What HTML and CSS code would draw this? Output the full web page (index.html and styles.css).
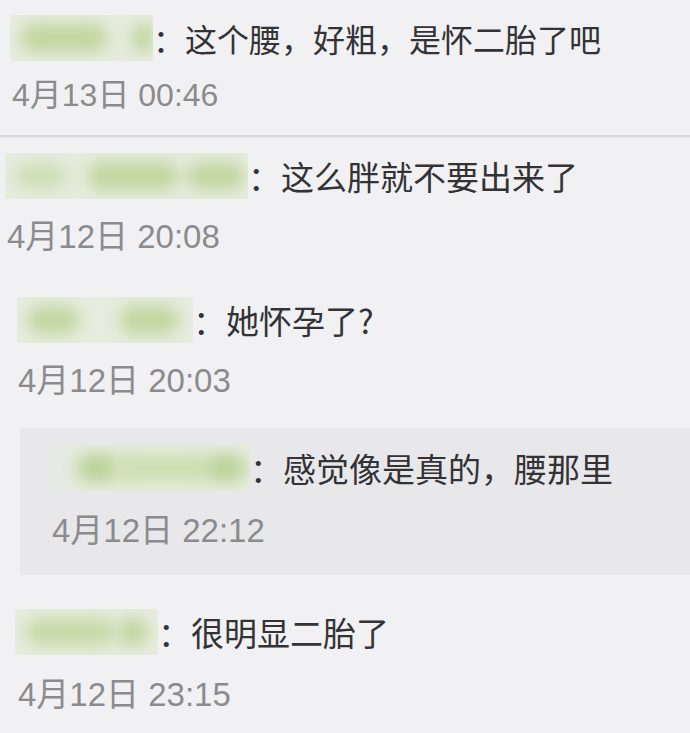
FILE: index.html
```html
<!DOCTYPE html>
<html lang="zh-CN">
<head>
<meta charset="utf-8">
<title>评论</title>
<link rel="stylesheet" href="styles.css">
</head>
<body>
<main class="feed">
  <section class="comment c1">
    <div class="line">
      <span class="name n1"><i class="blob b-a"></i><i class="blob b-b"></i></span>
      <span class="text">：这个腰，好粗，是怀二胎了吧</span>
    </div>
    <div class="time">4月13日 00:46</div>
  </section>
  <div class="divider"></div>
  <section class="comment c2">
    <div class="line">
      <span class="name n2"><i class="blob b-a"></i><i class="blob b-b"></i><i class="blob b-c"></i></span>
      <span class="text">：这么胖就不要出来了</span>
    </div>
    <div class="time">4月12日 20:08</div>
  </section>
  <section class="comment c3">
    <div class="line">
      <span class="name n3"><i class="blob b-a"></i><i class="blob b-b"></i></span>
      <span class="text">：她怀孕了?</span>
    </div>
    <div class="time">4月12日 20:03</div>
  </section>
  <section class="reply">
    <div class="line">
      <span class="name nr"><i class="blob b-a"></i><i class="blob b-b"></i><i class="blob b-c"></i></span>
      <span class="text">：感觉像是真的，腰那里</span>
    </div>
    <div class="time">4月12日 22:12</div>
  </section>
  <section class="comment c4">
    <div class="line">
      <span class="name n4"><i class="blob b-a"></i><i class="blob b-b"></i></span>
      <span class="text">：很明显二胎了</span>
    </div>
    <div class="time">4月12日 23:15</div>
  </section>
</main>
</body>
</html>
```
FILE: styles.css
```css
html, body {
  margin: 0;
  padding: 0;
}
body {
  background: #f1f1f4;
  font-family: "Liberation Sans", "Noto Sans CJK SC", sans-serif;
  width: 690px;
  height: 733px;
  overflow: hidden;
}
.feed {
  display: flex;
  flex-direction: column;
}
.line {
  display: flex;
  align-items: center;
  height: 46px;
}
.text {
  font-family: "Noto Sans CJK SC", sans-serif;
  font-size: 33px;
  color: #333336;
  white-space: nowrap;
  line-height: 46px;
}
.time {
  font-family: "Liberation Sans", "Noto Sans CJK SC", sans-serif;
  font-size: 33px;
  line-height: 36px;
  color: #8b8b8d;
  white-space: nowrap;
}

/* blurred user names */
.name {
  display: flex;
  align-items: center;
  height: 46px;
  overflow: hidden;
  background: #e7ecdf;
  flex: none;
}
.blob {
  display: block;
  height: 28px;
  border-radius: 14px;
  background: #c0d69e;
  filter: blur(8px);
  flex: none;
}

.n1 { width: 143px; }
.n1 .b-a { margin-left: 10px; width: 88px; }
.n1 .b-b { margin-left: 24px; width: 22px; height: 30px; }

.n2 { width: 243px; }
.n2 .b-a { margin-left: 10px; width: 52px; background: #cfdfb7; }
.n2 .b-b { margin-left: 20px; width: 92px; }
.n2 .b-c { margin-left: 8px; width: 58px; }

.n3 { width: 176px; }
.n3 .b-a { margin-left: 10px; width: 52px; }
.n3 .b-b { margin-left: 40px; width: 60px; }

.nr {
  width: 210px;
  background: linear-gradient(90deg, rgba(231,236,223,0) 0%, #e7ecdf 18%);
}
.nr .b-a { margin-left: 36px; width: 44px; background: #bad398; }
.nr .b-b { margin-left: -6px; width: 100px; background: #cddfb3; }
.nr .b-c { margin-left: -8px; width: 40px; background: #bad398; }

.n4 { width: 143px; }
.n4 .b-a { margin-left: 10px; width: 90px; background: #c6daa8; }
.n4 .b-b { margin-left: 2px; width: 32px; }

/* individual rows */
.c1 { padding: 15px 0 22px 10px; }
.c1 .text { font-size: 32px; }
.c1 .time { font-size: 32px; margin: 16px 0 0 2px; }

.divider {
  height: 2px;
  background: #d9d9dc;
  border-bottom: 1px solid #e6e6e9;
}

.c2 { padding: 15px 0 0 5px; }
.c2 .time { margin: 20px 0 0 2px; }

.c3 { padding: 42px 0 0 17px; }
.c3 .time { margin: 20px 0 0 1px; }

.reply {
  margin: 29px 0 0 20px;
  padding: 17px 0 26px 20px;
  background: #e8e8eb;
}
.reply .time { margin: 22px 0 0 12px; }

.c4 { padding: 34px 0 0 15px; }
.c4 .time { margin: 22px 0 0 3px; }
```
